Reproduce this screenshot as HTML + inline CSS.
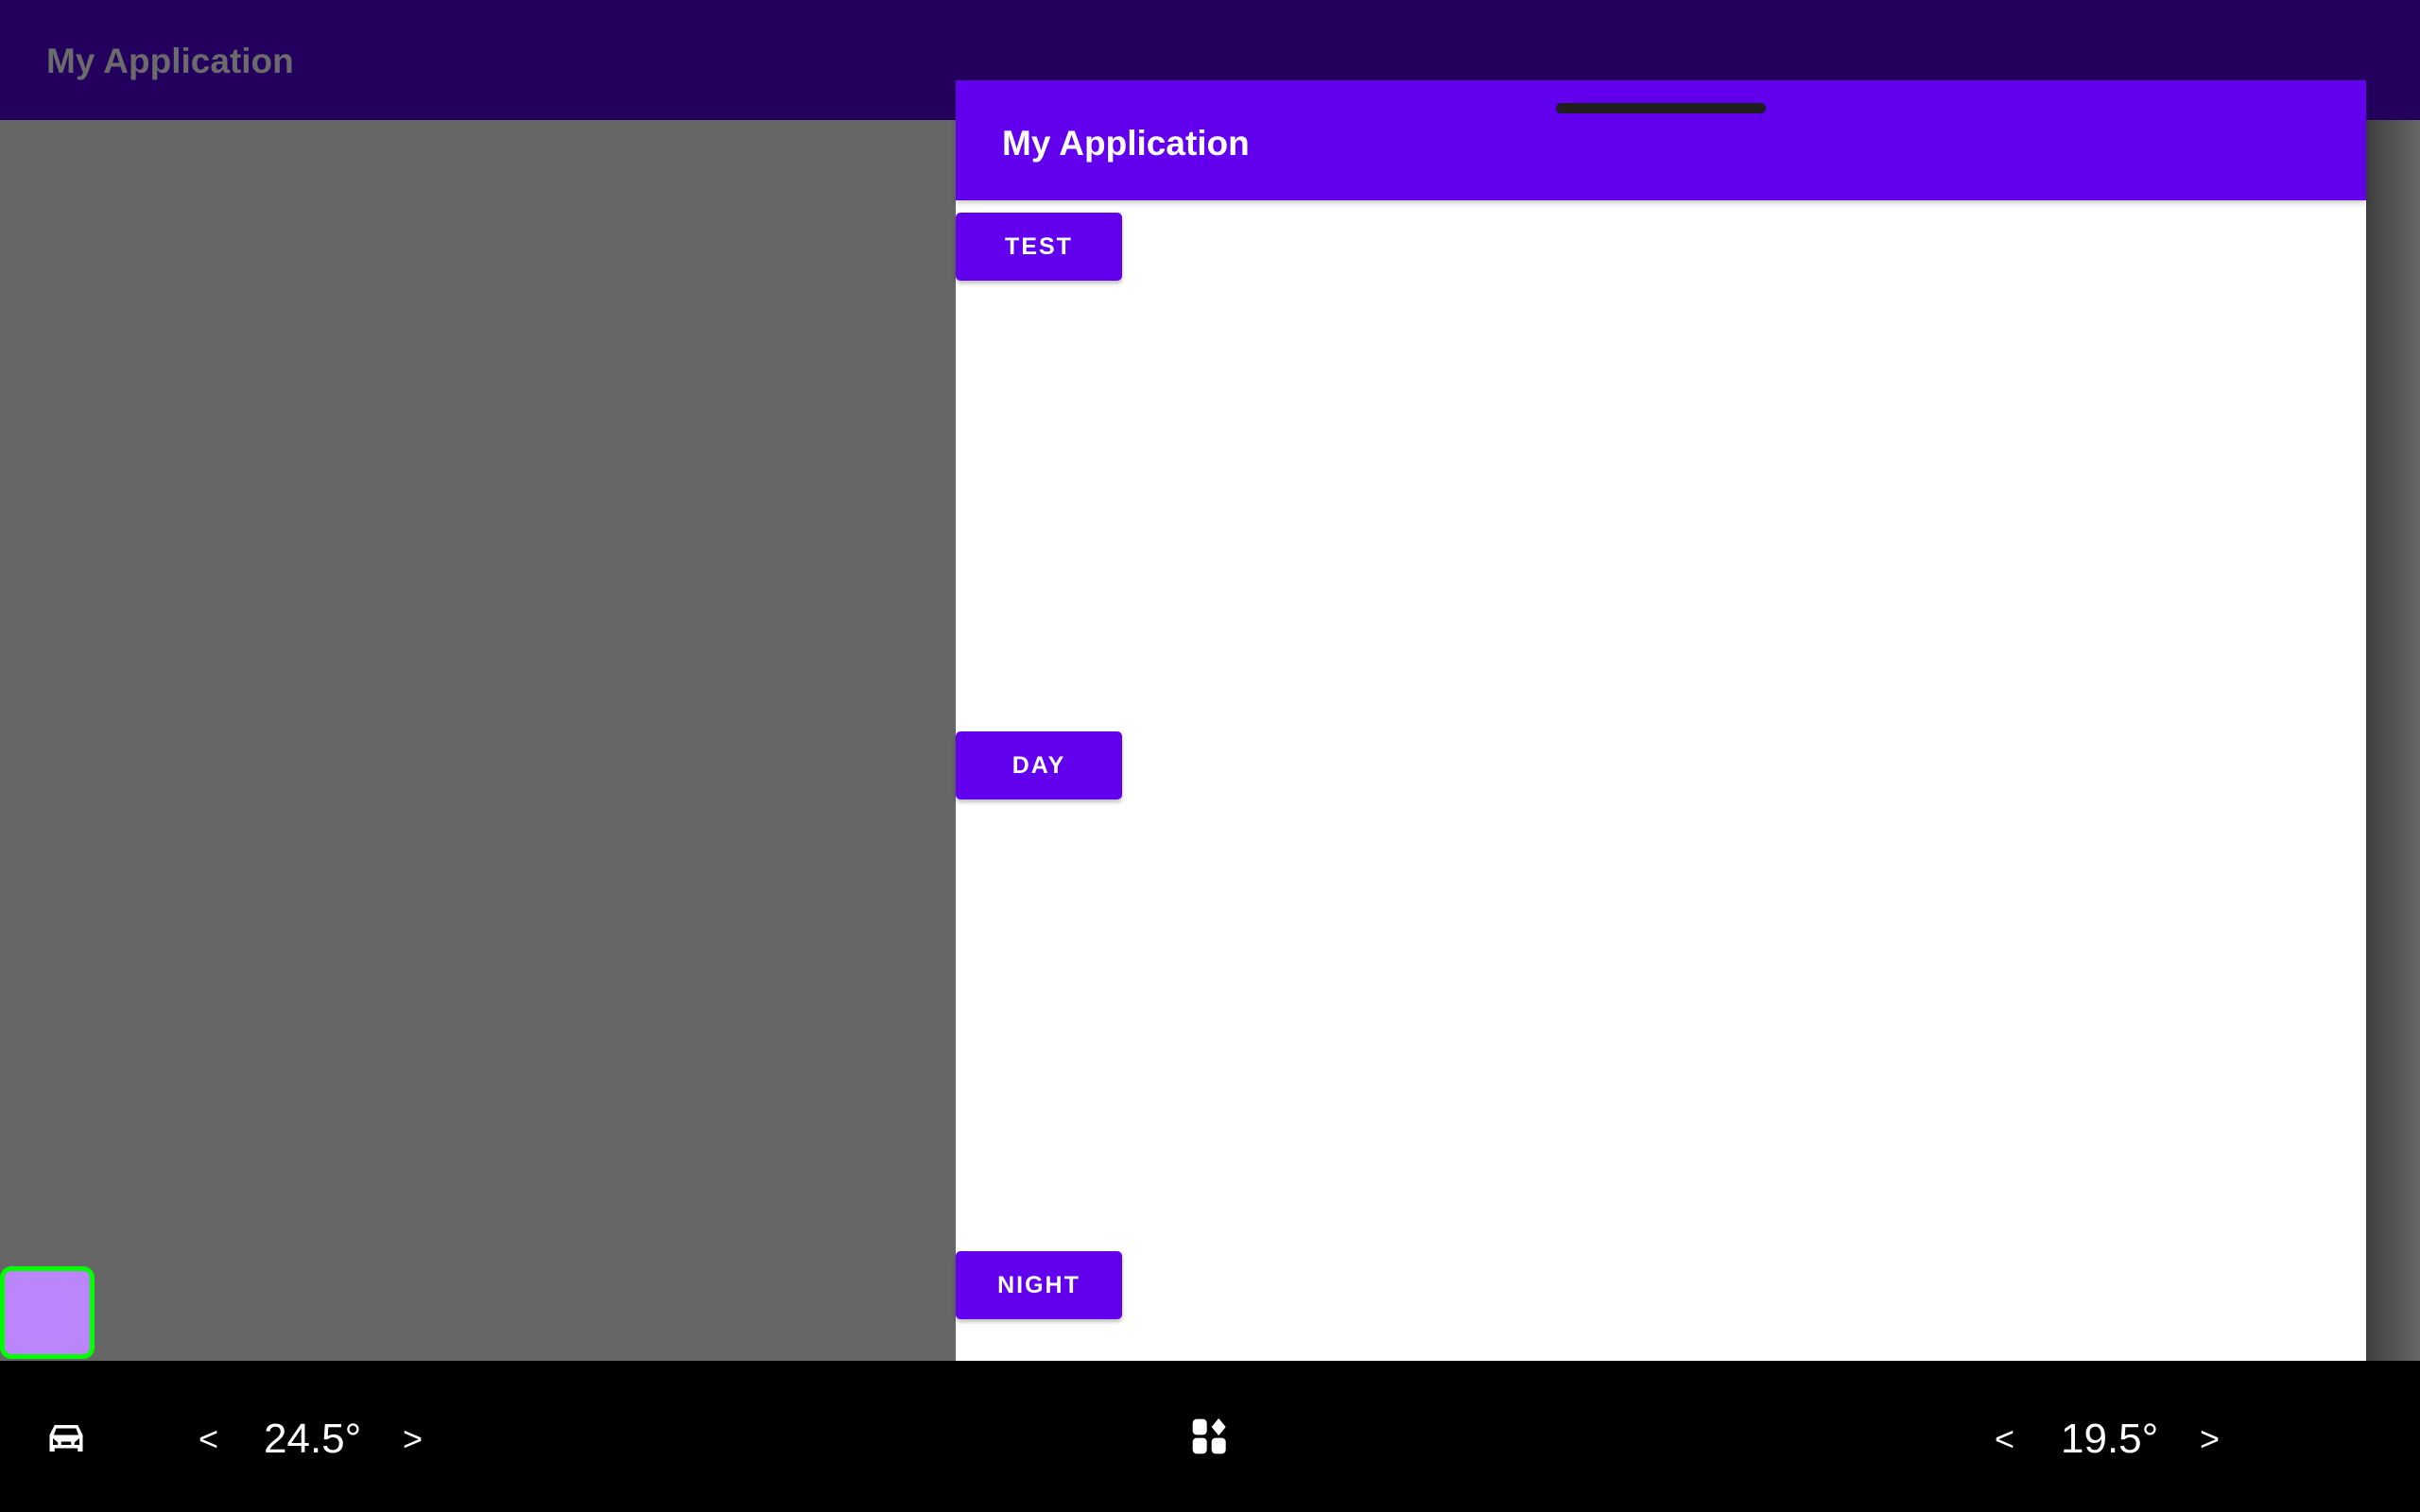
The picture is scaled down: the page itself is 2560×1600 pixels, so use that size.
<!DOCTYPE html>
<html><head><style>
*{margin:0;padding:0;box-sizing:border-box}
body{width:2560px;height:1600px;position:relative;overflow:hidden;background:#666;font-family:"Liberation Sans",Roboto,sans-serif}
.top{position:absolute;left:0;top:0;width:2560px;height:127px;background:#23005d}
.top span{position:absolute;left:49px;top:44px;font-size:37px;font-weight:bold;color:#6b6b6b}
.gray{position:absolute;left:0;top:127px;width:2560px;height:1313px;background:#666}
.shadow{position:absolute;left:2503px;top:127px;width:57px;height:1313px;background:linear-gradient(90deg,#3f3f3f,#666)}
.panel{position:absolute;left:1011px;top:85px;width:1492px;height:1355px;background:#fff}
.hdr{position:absolute;left:0;top:0;width:1492px;height:127px;background:#6200ee;box-shadow:0 3px 6px rgba(0,0,0,.2)}
.hdr span{position:absolute;left:49px;top:46px;font-size:37px;font-weight:bold;color:#fff}
.handle{position:absolute;left:635px;top:24px;width:222px;height:11px;border-radius:6px;background:#1e1e1e}
.btn{position:absolute;left:0;width:176px;height:72px;background:#6200ee;color:#fff;border-radius:5px;font-size:25px;font-weight:bold;letter-spacing:2px;display:flex;align-items:center;justify-content:center;box-shadow:0 3px 4px rgba(0,0,0,.25)}
.sq{position:absolute;left:0;top:1340px;width:100px;height:98px;background:#bb86fc;border:5px solid #00ff00;border-radius:12px}
.bot{position:absolute;left:0;top:1440px;width:2560px;height:160px;background:#000;color:#fff}
.t{position:absolute;top:58px;font-size:44px}
.a{position:absolute;top:62px;font-size:36px}
</style></head><body>
<div class="top"><span>My Application</span></div>
<div class="gray"></div>
<div class="shadow"></div>
<div class="panel">
<div class="hdr"><span>My Application</span><div class="handle"></div></div>
<div class="btn" style="top:140px">TEST</div>
<div class="btn" style="top:689px">DAY</div>
<div class="btn" style="top:1239px">NIGHT</div>
</div>
<div class="sq"></div>
<div class="bot">
<svg style="position:absolute;left:49px;top:64px" width="42" height="36" viewBox="0 0 24 20"><path fill="#fff" d="M5 2h14l3 6v10h-3v-2H5v2H2V8zM6 4 4.5 8h15L18 4zM4 10v4h3v-1.5zM20 10l-3 2.5V14h3zM9 12v2h6v-2z"/></svg>
<span class="a" style="left:210px">&lt;</span>
<span class="t" style="left:279px">24.5°</span>
<span class="a" style="left:426px">&gt;</span>
<svg style="position:absolute;left:1260px;top:60px" width="40" height="40" viewBox="0 0 24 24"><rect x="1" y="1" width="9" height="10" rx="2.5" fill="#fff"/><path fill="#fff" d="M17.5 0.5 22 6l-4.5 5.5L13 6z"/><rect x="1" y="13" width="9" height="10" rx="2.5" fill="#fff"/><rect x="13" y="13" width="9" height="10" rx="2.5" fill="#fff"/></svg>
<span class="a" style="left:2110px">&lt;</span>
<span class="t" style="left:2180px">19.5°</span>
<span class="a" style="left:2327px">&gt;</span>
</div>
</body></html>
